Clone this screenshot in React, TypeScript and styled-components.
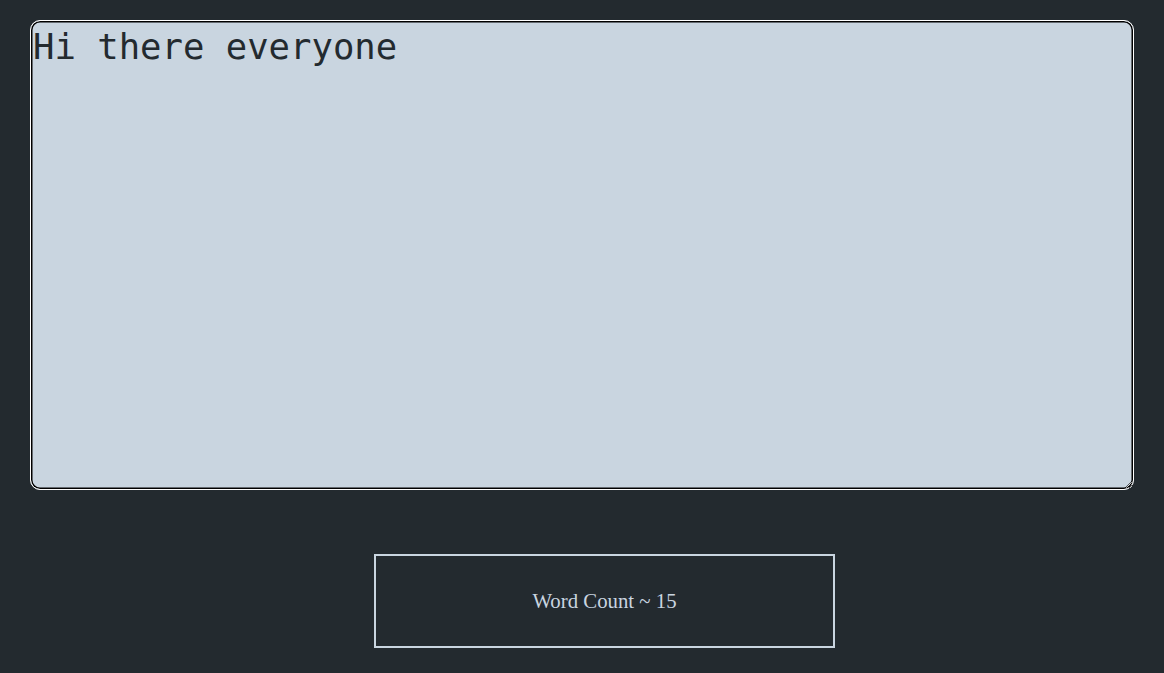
import React from "react";
import styled, { createGlobalStyle } from "styled-components";

const Global = createGlobalStyle`
  html, body {
    margin: 0;
    padding: 0;
    background: #232a2f;
  }
`;

const Page = styled.div`
  display: flex;
  flex-direction: column;
  padding: 20px 30px 0 30px;
  min-height: 673px;
  box-sizing: border-box;
  background: #232a2f;
`;

const Editor = styled.textarea`
  display: block;
  width: 100%;
  height: 470px;
  box-sizing: border-box;
  margin: 0;
  padding: 5px 2px 2px 2px;
  border: 1px solid #ffffff;
  border-radius: 10px;
  box-shadow: inset 0 0 0 1.5px #000000;
  background: #c9d5e0;
  color: #232a2f;
  font-family: "DejaVu Sans Mono", monospace;
  font-size: 35.6px;
  line-height: normal;
  outline: none;
`;

const CountBox = styled.div`
  display: flex;
  align-items: center;
  justify-content: center;
  width: 461px;
  height: 94px;
  box-sizing: border-box;
  margin: 64px 0 0 344px;
  border: 2px solid #c9d5e0;
  color: #c9d5e0;
  font-family: "Liberation Serif", serif;
  font-size: 20.8px;
`;

export default function App() {
  const [text, setText] = React.useState("Hi there everyone");
  return (
    <>
      <Global />
      <Page>
        <Editor value={text} onChange={(e) => setText(e.target.value)} />
        <CountBox>Word Count ~ 15</CountBox>
      </Page>
    </>
  );
}
